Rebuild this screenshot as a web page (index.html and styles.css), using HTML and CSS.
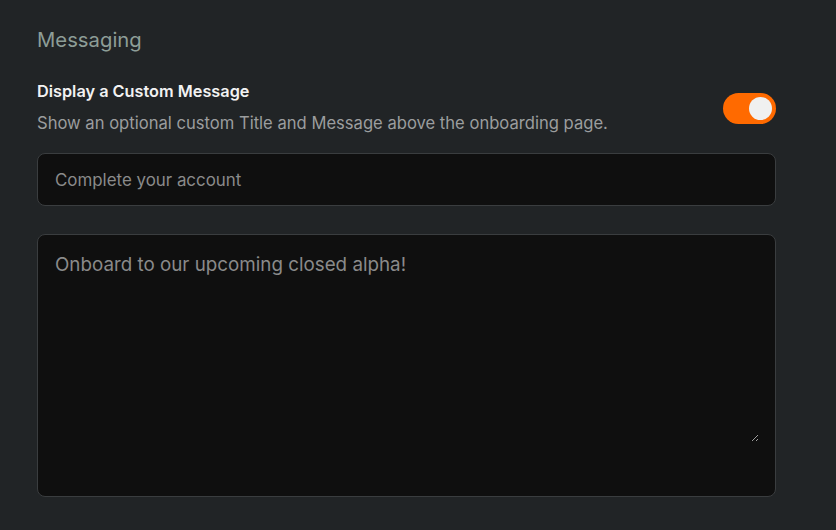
FILE: index.html
```html
<!DOCTYPE html>
<html lang="en">
<head>
<meta charset="utf-8">
<link rel="stylesheet" href="styles.css">
</head>
<body>
<section class="panel">
  <h2 class="heading">Messaging</h2>
  <div class="setting">
    <div class="setting-text">
      <div class="setting-title">Display a Custom Message</div>
      <div class="setting-desc">Show an optional custom Title and Message above the onboarding page.</div>
    </div>
    <div class="toggle on"><span class="knob"></span></div>
  </div>
  <div class="field">
    <input class="input" type="text" placeholder="Complete your account">
  </div>
  <div class="area-box">
    <textarea class="area" placeholder="Onboard to our upcoming closed alpha!"></textarea>
  </div>
</section>
</body>
</html>
```
FILE: styles.css
```css
html, body {
  margin: 0;
  padding: 0;
  background: #212426;
  color-scheme: dark;
}
body {
  font-family: Inter, "Noto Sans", sans-serif;
  width: 836px;
  height: 530px;
  overflow: hidden;
}
.panel {
  padding: 27px 60px 0 37px;
  display: flex;
  flex-direction: column;
}
.heading {
  margin: 0;
  font-size: 20.3px;
  font-weight: 400;
  color: #8d9d97;
  line-height: 26px;
}
.setting {
  margin-top: 27px;
  display: flex;
  align-items: center;
  justify-content: space-between;
}
.setting-title {
  font-size: 16.3px;
  font-weight: 600;
  color: #f2f2f2;
  line-height: 22px;
}
.setting-desc {
  margin-top: 10px;
  font-size: 16.6px;
  color: #9b9d9e;
  line-height: 22px;
}
.toggle {
  width: 53px;
  height: 31px;
  border-radius: 16px;
  background: #ff6a00;
  display: flex;
  align-items: center;
  justify-content: flex-end;
  padding: 0 4px;
  box-sizing: border-box;
  margin-top: 3px;
}
.knob {
  width: 23px;
  height: 23px;
  border-radius: 50%;
  background: #f0f0f0;
}
.field {
  margin-top: 19px;
}
.input {
  box-sizing: border-box;
  width: 739px;
  height: 53px;
  background: #0f0f0f;
  border: 1px solid #3a3d3f;
  border-radius: 8px;
  padding: 0 17px;
  font-family: inherit;
  font-size: 16.9px;
  color: #e0e0e0;
  outline: none;
}
.input::placeholder { color: #8a8a8a; }
.area-box {
  margin-top: 28px;
  box-sizing: border-box;
  width: 739px;
  height: 263px;
  background: #0f0f0f;
  border: 1px solid #3a3d3f;
  border-radius: 8px;
  padding: 17px 17px 0 17px;
}
.area {
  display: block;
  box-sizing: border-box;
  width: 704px;
  height: 190px;
  background: transparent;
  border: none;
  outline: none;
  padding: 0;
  font-family: inherit;
  font-size: 18.8px;
  line-height: 26px;
  color: #e0e0e0;
  resize: vertical;
}
.area::placeholder { color: #8a8a8a; }
```
